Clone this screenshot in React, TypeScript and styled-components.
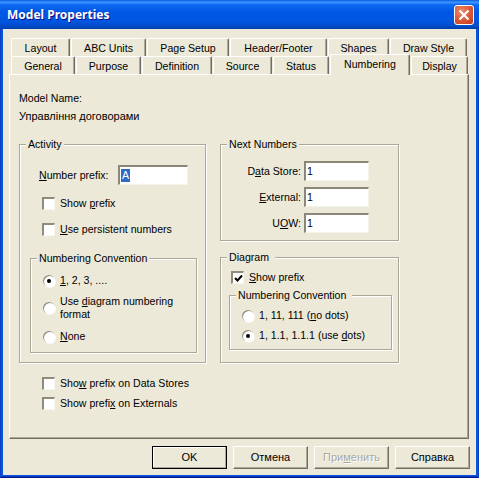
import React from 'react'
import styled, { createGlobalStyle } from 'styled-components'

const GlobalStyle = createGlobalStyle`
    html, body {
        margin: 0;
        padding: 0;
        background: #ece9d8;
    }
    body {
        font-family: "Liberation Sans", Arial, sans-serif;
        font-size: 10.6px;
        line-height: 13px;
        color: #000;
    }
`

const Window = styled.div`
    width: 479px;
    height: 478px;
    box-sizing: border-box;
    display: flex;
    flex-direction: column;
    background: #0855dd;
    box-shadow: inset 1px 0 0 #0a3fc4, inset -1px 0 0 #0a3fc4, inset 0 -1px 0 #00138c, inset 0 -2px 0 #0a3bb8;
    overflow: hidden;
`
const TitleBar = styled.div`
    height: 29px;
    flex: none;
    display: flex;
    align-items: center;
    justify-content: space-between;
    padding: 1px 5px 1px 7px;
    box-sizing: border-box;
    background: linear-gradient(
        180deg,
        #0a5de0 0%,
        #3d95ff 8%,
        #0f6af0 16%,
        #0058e6 40%,
        #0055de 75%,
        #0049c4 92%,
        #003dac 100%
    );
`
const Title = styled.div`
    font-family: "Noto Sans", sans-serif;
    font-weight: 700;
    font-size: 12px;
    color: #fff;
    text-shadow: 1px 1px 0 #0f1089;
`
const CloseButton = styled.div`
    width: 20px;
    height: 20px;
    box-sizing: border-box;
    border: 1px solid #fff;
    border-radius: 3px;
    display: flex;
    align-items: center;
    justify-content: center;
    background: radial-gradient(circle at 35% 30%, #ec8b6c 0%, #dc5a38 50%, #c0391a 100%);
`
const Body = styled.div`
    flex: 1;
    margin: 0 3px 3px;
    padding: 9px 6px 0;
    background: #ece9d8;
    display: flex;
    flex-direction: column;
`
const TabRow = styled.div`
    display: flex;
    height: 18px;
    padding-left: 2px;
    gap: 1px;
`
const Tab = styled.div<{ $w: number; $active?: boolean }>`
    position: relative;
    z-index: ${(p) => (p.$active ? 2 : 1)};
    width: ${(p) => p.$w}px;
    height: ${(p) => (p.$active ? 21 : 18)}px;
    margin-top: ${(p) => (p.$active ? -2 : 0)}px;
    box-sizing: border-box;
    flex: none;
    display: flex;
    justify-content: center;
    align-items: flex-start;
    padding-top: 3px;
    background: #ece9d8;
    border-top: 1px solid #fff;
    border-left: 1px solid #fff;
    border-right: 1px solid #716f64;
    border-top-left-radius: 2px;
    border-top-right-radius: 2px;
    box-shadow: inset -1px 0 0 #aca899;
`
const Panel = styled.div`
    height: 365px;
    box-sizing: border-box;
    flex: none;
    padding: 17px 0 0 9px;
    border-top: 1px solid #fff;
    border-left: 1px solid #fff;
    border-right: 1px solid #716f64;
    border-bottom: 1px solid #716f64;
    box-shadow: inset -1px -1px 0 #aca899;
    width: 460px;
`
const Caption = styled.div`
    margin-bottom: 5px;
`
const Cyrillic = styled.span`
    font-size: 11px;
`
const Columns = styled.div`
    display: flex;
    gap: 14px;
    margin-top: 15px;
    align-items: flex-start;
`
const Column = styled.div<{ $w: number }>`
    width: ${(p) => p.$w}px;
    display: flex;
    flex-direction: column;
`
const Group = styled.fieldset<{ $h: number; $w: number; $top?: number; $left?: number }>`
    width: ${(p) => p.$w}px;
    height: ${(p) => p.$h}px;
    margin: ${(p) => p.$top || 0}px 0 0 ${(p) => p.$left || 0}px;
    padding: 0;
    box-sizing: border-box;
    border: 1px solid #aca899;
    box-shadow: 1px 1px 0 #fff, inset 1px 1px 0 #fff;
    min-width: 0;
`
const Legend = styled.legend<{ $pad?: number }>`
    margin-left: 6px;
    padding: 0 ${(p) => p.$pad ?? 2}px 0 2px;
    background: #ece9d8;
    line-height: 13px;
`
const PrefixRow = styled.div`
    display: flex;
    align-items: center;
    height: 20px;
    margin: 14px 0 12px 19px;
`
const PrefixLabel = styled.span`
    width: 79px;
`
const Field = styled.div<{ $w: number }>`
    width: ${(p) => p.$w}px;
    height: 20px;
    box-sizing: border-box;
    background: #fff;
    border-top: 2px solid #8a8778;
    border-left: 2px solid #8a8778;
    border-right: 1px solid #f5f4ea;
    border-bottom: 1px solid #f5f4ea;
    padding: 2px 0 0 1px;
    line-height: 13px;
`
const Selected = styled.span`
    background: #316ac5;
    color: #fff;
    display: inline-block;
    padding: 0 1px;
`
const CheckRow = styled.div<{ $left: number; $after: number; $top?: number }>`
    display: flex;
    align-items: center;
    gap: 5px;
    height: 13px;
    margin: ${(p) => p.$top || 0}px 0 ${(p) => p.$after}px ${(p) => p.$left}px;
`
const Box = styled.div`
    width: 13px;
    height: 13px;
    box-sizing: border-box;
    flex: none;
    background: #fff;
    border-top: 2px solid #8f8c7c;
    border-left: 2px solid #8f8c7c;
    border-right: 1px solid #f8f7f0;
    border-bottom: 1px solid #f8f7f0;
    display: flex;
    align-items: center;
    justify-content: center;
`
const RadioRow = styled.div<{ $left: number; $h: number; $after: number; $top?: number }>`
    display: flex;
    align-items: center;
    gap: 5px;
    height: ${(p) => p.$h}px;
    margin: ${(p) => p.$top || 0}px 0 ${(p) => p.$after}px ${(p) => p.$left}px;
`
const Radio = styled.div<{ $on?: boolean }>`
    width: 12px;
    height: 12px;
    flex: none;
    border-radius: 50%;
    background: #fff;
    box-shadow: inset 1px 1px 0 #8f8c7c, 1px 1px 0 #fbfaf5;
    display: flex;
    align-items: center;
    justify-content: center;
    &::after {
        content: '';
        width: 4px;
        height: 4px;
        border-radius: 50%;
        background: ${(p) => (p.$on ? '#000' : 'transparent')};
    }
`
const NumberGrid = styled.div`
    display: grid;
    grid-template-columns: 65px 65px;
    justify-content: start;
    column-gap: 3px;
    row-gap: 6px;
    margin: 10px 0 0 15px;
    align-items: center;
`
const NumberLabel = styled.div`
    text-align: right;
`
const ExtraChecks = styled.div`
    margin: 14px 0 0 23px;
`
const ButtonRow = styled.div`
    display: flex;
    justify-content: flex-end;
    gap: 6px;
    padding: 7px 0 0;
`
const Button = styled.div<{ $default?: boolean; $disabled?: boolean }>`
    width: 75px;
    height: 23px;
    box-sizing: border-box;
    display: flex;
    align-items: center;
    justify-content: center;
    font-size: 11px;
    background: #ece9d8;
    color: ${(p) => (p.$disabled ? '#aca899' : '#000')};
    text-shadow: ${(p) => (p.$disabled ? '1px 1px 0 #fff' : 'none')};
    border-top: 1px solid ${(p) => (p.$default ? '#000' : '#fff')};
    border-left: 1px solid ${(p) => (p.$default ? '#000' : '#fff')};
    border-right: 1px solid ${(p) => (p.$default ? '#000' : '#716f64')};
    border-bottom: 1px solid ${(p) => (p.$default ? '#000' : '#716f64')};
    box-shadow: inset -1px -1px 0 #aca899 ${(p) => (p.$default ? ', inset 1px 1px 0 #fff' : '')};
`

const row1 = [
    ['Layout', 59],
    ['ABC Units', 75],
    ['Page Setup', 82],
    ['Header/Footer', 97],
    ['Shapes', 61],
    ['Draw Style', 77],
] as const

const row2 = [
    ['General', 64],
    ['Purpose', 65],
    ['Definition', 70],
    ['Source', 59],
    ['Status', 56],
    ['Numbering', 80],
    ['Display', 57],
] as const

function CloseIcon() {
    return (
        <svg width="12" height="12" viewBox="0 0 12 12">
            <path d="M1.5 1.5 L10.5 10.5 M10.5 1.5 L1.5 10.5" stroke="#fff" strokeWidth="2.2" fill="none" />
        </svg>
    )
}

function CheckMark() {
    return (
        <svg width="9" height="9" viewBox="0 0 9 9">
            <path d="M1 4 L3.5 6.5 L8 1.5" stroke="#000" strokeWidth="2" fill="none" />
        </svg>
    )
}

export default function App() {
    return (
        <Window>
            <GlobalStyle />
            <TitleBar>
                <Title>Model Properties</Title>
                <CloseButton>
                    <CloseIcon />
                </CloseButton>
            </TitleBar>
            <Body>
                <TabRow>
                    {row1.map(([name, w]) => (
                        <Tab key={name} $w={w}>
                            {name}
                        </Tab>
                    ))}
                </TabRow>
                <TabRow>
                    {row2.map(([name, w]) => (
                        <Tab key={name} $w={w} $active={name === 'Numbering'}>
                            {name}
                        </Tab>
                    ))}
                </TabRow>
                <Panel>
                    <Caption>Model Name:</Caption>
                    <Caption>
                        <Cyrillic>Управління договорами</Cyrillic>
                    </Caption>
                    <Columns>
                        <Column $w={187}>
                            <Group $w={187} $h={225}>
                                <Legend>Activity</Legend>
                                <PrefixRow>
                                    <PrefixLabel>
                                        <u>N</u>umber prefix:
                                    </PrefixLabel>
                                    <Field $w={70}>
                                        <Selected>A</Selected>
                                    </Field>
                                </PrefixRow>
                                <CheckRow $left={22} $after={13}>
                                    <Box />
                                    <span>
                                        Show <u>p</u>refix
                                    </span>
                                </CheckRow>
                                <CheckRow $left={22} $after={16}>
                                    <Box />
                                    <span>
                                        <u>U</u>se persistent numbers
                                    </span>
                                </CheckRow>
                                <Group $w={167} $h={101} $left={10}>
                                    <Legend>Numbering Convention</Legend>
                                    <RadioRow $left={12} $h={13} $after={8} $top={9}>
                                        <Radio $on />
                                        <span>
                                            <u>1</u>, 2, 3, ....
                                        </span>
                                    </RadioRow>
                                    <RadioRow $left={12} $h={26} $after={9}>
                                        <Radio />
                                        <span>
                                            Use <u>d</u>iagram numbering
                                            <br />
                                            format
                                        </span>
                                    </RadioRow>
                                    <RadioRow $left={12} $h={13} $after={0}>
                                        <Radio />
                                        <span>
                                            <u>N</u>one
                                        </span>
                                    </RadioRow>
                                </Group>
                            </Group>
                            <ExtraChecks>
                                <CheckRow $left={0} $after={7}>
                                    <Box />
                                    <span>
                                        Sho<u>w</u> prefix on Data Stores
                                    </span>
                                </CheckRow>
                                <CheckRow $left={0} $after={0}>
                                    <Box />
                                    <span>
                                        Show prefi<u>x</u> on Externals
                                    </span>
                                </CheckRow>
                            </ExtraChecks>
                        </Column>
                        <Column $w={179}>
                            <Group $w={179} $h={103}>
                                <Legend>Next Numbers</Legend>
                                <NumberGrid>
                                    <NumberLabel>
                                        D<u>a</u>ta Store:
                                    </NumberLabel>
                                    <Field $w={65}>1</Field>
                                    <NumberLabel>
                                        <u>E</u>xternal:
                                    </NumberLabel>
                                    <Field $w={65}>1</Field>
                                    <NumberLabel>
                                        U<u>O</u>W:
                                    </NumberLabel>
                                    <Field $w={65}>1</Field>
                                </NumberGrid>
                            </Group>
                            <Group $w={179} $h={112} $top={10}>
                                <Legend $pad={6}>Diagram</Legend>
                                <CheckRow $left={10} $after={5} $top={7}>
                                    <Box>
                                        <CheckMark />
                                    </Box>
                                    <span>
                                        <u>S</u>how prefix
                                    </span>
                                </CheckRow>
                                <Group $w={163} $h={61} $left={8}>
                                    <Legend $pad={6}>Numbering Convention</Legend>
                                    <RadioRow $left={12} $h={13} $after={7} $top={7}>
                                        <Radio />
                                        <span>
                                            1, 11, 111 (<u>n</u>o dots)
                                        </span>
                                    </RadioRow>
                                    <RadioRow $left={12} $h={13} $after={0}>
                                        <Radio $on />
                                        <span>
                                            1, 1.1, 1.1.1 (use <u>d</u>ots)
                                        </span>
                                    </RadioRow>
                                </Group>
                            </Group>
                        </Column>
                    </Columns>
                </Panel>
                <ButtonRow>
                    <Button $default>OK</Button>
                    <Button>Отмена</Button>
                    <Button $disabled>
                        <span>
                            При<u>м</u>енить
                        </span>
                    </Button>
                    <Button>Справка</Button>
                </ButtonRow>
            </Body>
        </Window>
    )
}
